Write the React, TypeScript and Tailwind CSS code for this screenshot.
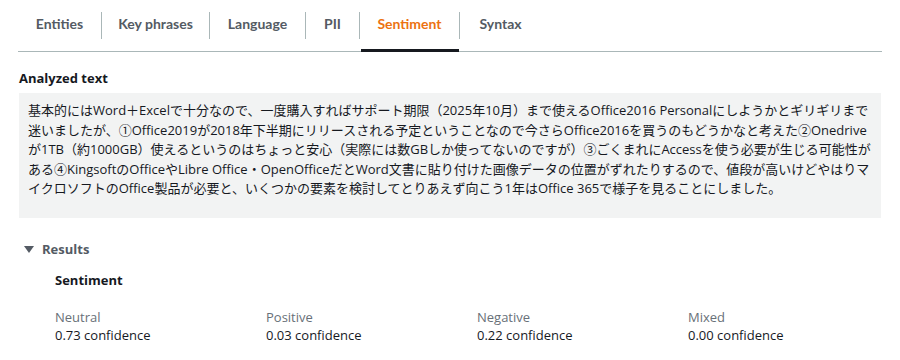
const tabs = [
  { name: 'Entities', w: 'w-[83px]' },
  { name: 'Key phrases', w: 'w-[108px]' },
  { name: 'Language', w: 'w-[96px]' },
  { name: 'PII', w: 'w-[54px]' },
  { name: 'Sentiment', w: 'w-[100px]' },
  { name: 'Syntax', w: 'w-[82px]' },
];

const analyzed =
  '基本的にはWord＋Excelで十分なので、一度購入すればサポート期限（2025年10月）まで使えるOffice2016 Personalにしようかとギリギリまで迷いましたが、①Office2019が2018年下半期にリリースされる予定ということなので今さらOffice2016を買うのもどうかなと考えた②Onedriveが1TB（約1000GB）使えるというのはちょっと安心（実際には数GBしか使ってないのですが）③ごくまれにAccessを使う必要が生じる可能性がある④KingsoftのOfficeやLibre Office・OpenOfficeだとWord文書に貼り付けた画像データの位置がずれたりするので、値段が高いけどやはりマイクロソフトのOffice製品が必要と、いくつかの要素を検討してとりあえず向こう1年はOffice 365で様子を見ることにしました。';

const scores = [
  { label: 'Neutral', value: '0.73' },
  { label: 'Positive', value: '0.03' },
  { label: 'Negative', value: '0.22' },
  { label: 'Mixed', value: '0.00' },
];

export default function App() {
  return (
    <div
      className="w-[900px] h-[360px] bg-white overflow-hidden text-[#16191f]"
      style={{ fontFamily: '"Open Sans", "Noto Sans CJK JP", sans-serif' }}
    >
      <div className="ml-[18px] w-[864px] border-b border-[#aab7b8] flex h-[52px] pt-[12px]">
        {tabs.map((t, i) => {
          const active = t.name === 'Sentiment';
          return (
            <div
              key={t.name}
              className={
                'relative flex justify-center h-[27px] ' +
                t.w +
                (i > 0 ? ' border-l border-[#aab7b8]' : '')
              }
            >
              <span
                className={
                  'font-[Lato] text-[14px] font-bold leading-[24px] ' +
                  (active ? 'text-[#ec7211]' : 'text-[#545b64]')
                }
              >
                {t.name}
              </span>
              {active && (
                <div className="absolute left-[1px] right-0 bottom-[-13px] h-[3px] bg-[#16191f]" />
              )}
            </div>
          );
        })}
      </div>

      <div className="px-[19px] pt-[18px]">
        <div className="text-[13px] font-bold leading-[17px]">Analyzed text</div>
        <div className="mt-[6px] w-[862px] h-[125px] bg-[#f2f3f3] px-[9px] pt-[8px] text-[13px] leading-[19.6px] text-[#16191f]">
          {analyzed}
        </div>
      </div>

      <div className="pl-[24px] pt-[23px]">
        <div className="flex items-center gap-[8px] h-[18px]">
          <svg width="10" height="8" viewBox="0 0 10 8">
            <path d="M0 0 L10 0 L5 7 Z" fill="#545b64" />
          </svg>
          <span className="text-[13px] font-bold text-[#545b64]">Results</span>
        </div>
        <div className="pl-[31px] pt-[13px]">
          <div className="text-[13px] font-bold leading-[17px]">Sentiment</div>
          <div className="grid grid-cols-4 w-[844px] mt-[19px] text-[13px] leading-[18px]">
            {scores.map((s) => (
              <div key={s.label}>
                <div className="text-[#687078]">{s.label}</div>
                <div className="text-[#16191f]">{s.value} confidence</div>
              </div>
            ))}
          </div>
        </div>
      </div>
    </div>
  );
}
